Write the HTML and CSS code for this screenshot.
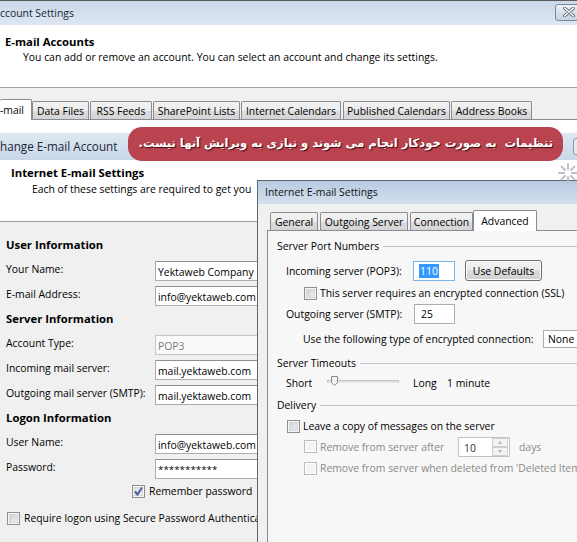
FILE: index.html
```html
<!DOCTYPE html>
<html lang="en">
<head>
<meta charset="utf-8">
<title>Account Settings</title>
<link rel="stylesheet" href="styles.css">
</head>
<body>
<div class="screen">

  <section class="win acct">
    <header class="tbar tbar-acct">
      <span class="ttl">ccount Settings</span>
      <span class="xbtn"><svg width="12" height="10" viewBox="0 0 12 10"><path d="M1.5 1 L10.5 9 M10.5 1 L1.5 9" stroke="#5a6470" stroke-width="3.2" stroke-linecap="round"/><path d="M1.5 1 L10.5 9 M10.5 1 L1.5 9" stroke="#ffffff" stroke-width="1.6" stroke-linecap="round"/></svg></span>
    </header>
    <div class="acct-head">
      <h1 class="bh">E-mail Accounts</h1>
      <p class="desc">You can add or remove an account. You can select an account and change its settings.</p>
    </div>
    <nav class="tabs tabs-acct">
      <span class="tab sel t1">-mail</span>
      <span class="tab t2">Data Files</span>
      <span class="tab t3">RSS Feeds</span>
      <span class="tab t4">SharePoint Lists</span>
      <span class="tab t5">Internet Calendars</span>
      <span class="tab t6">Published Calendars</span>
      <span class="tab t7">Address Books</span>
    </nav>
    <div class="acct-panel"></div>
  </section>

  <section class="win chg">
    <header class="tbar tbar-chg">
      <span class="ttl2">hange E-mail Account</span>
      <span class="chg-btn"></span>
    </header>
    <div class="chg-head">
      <h2 class="bh">Internet E-mail Settings</h2>
      <p class="desc2">Each of these settings are required to get you</p>
    </div>
    <div class="chg-body">
      <h3 class="bh sec first">User Information</h3>
      <div class="frow"><span class="flbl">Your Name:</span><span class="tb">Yektaweb Company</span></div>
      <div class="frow"><span class="flbl">E-mail Address:</span><span class="tb">info@yektaweb.com</span></div>
      <h3 class="bh sec">Server Information</h3>
      <div class="frow"><span class="flbl">Account Type:</span><span class="tb dis">POP3</span></div>
      <div class="frow"><span class="flbl">Incoming mail server:</span><span class="tb">mail.yektaweb.com</span></div>
      <div class="frow"><span class="flbl">Outgoing mail server (SMTP):</span><span class="tb">mail.yektaweb.com</span></div>
      <h3 class="bh sec">Logon Information</h3>
      <div class="frow"><span class="flbl">User Name:</span><span class="tb">info@yektaweb.com</span></div>
      <div class="frow"><span class="flbl">Password:</span><span class="tb pw">***********</span></div>
      <div class="crow remember"><span class="cb on"><svg width="11" height="11" viewBox="0 0 11 11"><path d="M2 5.5 L4.5 8.5 L9 1.5" fill="none" stroke="#4b5f97" stroke-width="2"/></svg></span><span>Remember password</span></div>
      <div class="crow require"><span class="cb"></span><span>Require logon using Secure Password Authentication</span></div>
    </div>
  </section>

  <div class="banner"><p class="banner-txt" dir="rtl" lang="fa">تنظیمات  به صورت خودکار انجام می شوند و نیازی به ویرایش آنها نیست.</p></div>

  <svg class="spinner" width="22" height="22" viewBox="0 0 22 22">
    <g stroke="#b9bec6" stroke-width="2" stroke-linecap="round">
      <path d="M11 2 L11 7"/><path d="M11 15 L11 20"/><path d="M2 11 L7 11"/><path d="M15 11 L20 11"/>
      <path d="M4.6 4.6 L8 8"/><path d="M14 14 L17.4 17.4"/><path d="M4.6 17.4 L8 14"/><path d="M14 8 L17.4 4.6"/>
    </g>
  </svg>

  <section class="win inet">
    <header class="tbar tbar-inet"><span class="ttl3">Internet E-mail Settings</span></header>
    <div class="inet-body">
      <nav class="tabs tabs-inet">
        <span class="tab i1">General</span>
        <span class="tab i2">Outgoing Server</span>
        <span class="tab i3">Connection</span>
        <span class="tab sel i4">Advanced</span>
      </nav>
      <div class="inet-panel">
        <div class="grp g1"><span>Server Port Numbers</span><i class="gline"></i></div>
        <div class="row r-in">
          <span class="lbl">Incoming server (POP3):</span>
          <span class="tb2 focus"><span class="hl">110</span></span>
          <span class="btn">Use Defaults</span>
        </div>
        <div class="crow2 r-ssl"><span class="cb"></span><span>This server requires an encrypted connection (SSL)</span></div>
        <div class="row r-out">
          <span class="lbl">Outgoing server (SMTP):</span>
          <span class="tb2 out">25</span>
        </div>
        <div class="row r-enc">
          <span class="lbl2">Use the following type of encrypted connection:</span>
          <span class="sel-box">None</span>
        </div>
        <div class="grp g2"><span>Server Timeouts</span><i class="gline"></i></div>
        <div class="row r-slide">
          <span class="short">Short</span>
          <span class="track"><svg class="thumb" width="7" height="10" viewBox="0 0 7 10"><path d="M0.5 0.5 H6.5 V6.5 L3.5 9.5 L0.5 6.5 Z" fill="#f2f2f2" stroke="#8a8a8a"/></svg></span>
          <span class="long">Long</span>
          <span>1 minute</span>
        </div>
        <div class="grp g3"><span>Delivery</span><i class="gline"></i></div>
        <div class="crow2 r-leave"><span class="cb"></span><span>Leave a copy of messages on the server</span></div>
        <div class="crow2 r-after dim">
          <span class="cb off"></span><span class="after-lbl">Remove from server after</span>
          <span class="spin"><span class="spin-val">10</span><span class="spin-btns"><i class="up"></i><i class="dn"></i></span></span>
          <span class="days">days</span>
        </div>
        <div class="crow2 r-del dim"><span class="cb off"></span><span>Remove from server when deleted from 'Deleted Item</span></div>
      </div>
    </div>
  </section>

</div>
</body>
</html>
```

FILE: styles.css
```css
* { box-sizing: border-box; }
html, body { margin: 0; padding: 0; background: #f0f0f0; }
body { font-family: "Open Sans", "Noto Sans", sans-serif; font-size: 10.4px; color: #000; }
p, h1, h2, h3 { margin: 0; font-weight: normal; }

.screen { position: relative; width: 577px; height: 542px; overflow: hidden; background: #f0f0f0; }

.win { position: absolute; overflow: hidden; }
.bh { font-weight: 700; font-size: 11.3px; line-height: 14px; }

/* ---------- Account Settings ---------- */
.acct { left: 0; top: 0; width: 577px; height: 542px; background: #f0f0f0; }
.tbar-acct {
  height: 25px; border-top: 1px solid #5b5b5b;
  background: linear-gradient(#cbd8e9, #d6e1ef 60%, #dde6f2);
  display: flex; align-items: center; justify-content: space-between;
}
.ttl { color: #1c2633; line-height: 14px; padding-bottom: 1px; }
.xbtn {
  width: 27px; height: 17px; margin-right: -5px; margin-top: -2px; flex: none;
  border: 1px solid #7b8797; border-radius: 3px;
  background: linear-gradient(#f1f4f8, #d8e0ea 50%, #c8d2de);
  display: flex; align-items: center; padding-left: 7px;
}
.acct-head { background: #fff; height: 63px; border-bottom: 1px solid #a0a0a0; padding: 10px 0 0 5px; }
.desc { margin: 1px 0 0 18px; line-height: 14px; }

.tabs { display: flex; align-items: flex-end; }
.tab {
  flex: none; height: 18px; border: 1px solid #898c95; border-bottom: none;
  background: linear-gradient(#f3f3f3, #ebebeb 50%, #dddddd 51%, #d4d4d4);
  display: flex; align-items: center; justify-content: center;
  line-height: 14px; white-space: nowrap; border-radius: 2px 2px 0 0;
}
.tab.sel { height: 21px; background: #fff; margin-bottom: -1px; position: relative; z-index: 1; }
.tabs-acct { height: 31px; }
.t1 { width: 32px; justify-content: flex-start; border-left: none; }
.t2 { width: 57px; }
.t3 { width: 62px; margin-left: 1px; }
.t4 { width: 87px; margin-left: 1px; }
.t5 { width: 100px; margin-left: 1px; }
.t6 { width: 107px; margin-left: 2px; }
.t7 { width: 81px; margin-left: 1px; }
.acct-panel { height: 400px; background: #fff; border-top: 1px solid #898c95; }

/* ---------- Change E-mail Account ---------- */
.chg { left: 0; top: 133px; width: 577px; height: 409px; background: #f0f0f0; }
.tbar-chg {
  height: 27px; background: linear-gradient(#dfe8f2, #d3dfed 50%, #c9d7e8);
  display: flex; align-items: center; justify-content: space-between;
}
.ttl2 { font-size: 11.7px; color: #1c2633; line-height: 15px; }
.chg-btn { flex: none; width: 12px; height: 17px; margin-right: -8px; border: 1px solid #8a98ab; border-radius: 3px; background: #e3eaf3; }
.chg-head { height: 62px; background: #fff; border-bottom: 1px solid #a0a0a0; padding: 6px 0 0 11px; }
.desc2 { margin: 2px 0 0 21px; line-height: 14px; white-space: nowrap; }

.chg-body { padding: 16px 0 0 6px; width: 257px; }
.sec { margin: 1px 0 9px; white-space: nowrap; }
.sec.first { margin-top: 0; }
.frow { height: 25px; display: flex; align-items: flex-start; white-space: nowrap; }
.flbl { flex: none; width: 149px; line-height: 14px; padding-top: 1px; }
.tb {
  width: 120px; height: 20px; flex: none;
  border: 1px solid #abadb3; border-top-color: #8e9096; background: #fff;
  padding: 1px 0 0 2px; line-height: 18px; margin-top: 0;
}
.tb.dis { color: #7a7a7a; background: #fafafa; border-color: #c5c5c5; }
.tb.pw { font-size: 9.8px; letter-spacing: 0; }

.crow { display: flex; align-items: center; gap: 4px; white-space: nowrap; line-height: 14px; }
.remember { margin: 0 0 0 126px; height: 14px; }
.require { margin: 13px 0 0 1px; height: 14px; }

.cb {
  width: 13px; height: 13px; flex: none; border: 1px solid #8f8f8f;
  background: linear-gradient(135deg, #c9ccd1, #f4f4f4);
  box-shadow: inset 0 0 0 1px #f6f6f6, inset 0 0 0 2px #d4d6d9;
  display: flex; align-items: center; justify-content: center;
}
.cb.on { background: linear-gradient(135deg, #d6dbe2, #f6f6f6); }
.cb.off { border-color: #bcbcbc; background: #f4f4f4; box-shadow: inset 0 0 0 1px #fff; }

/* ---------- Banner ---------- */
.banner {
  position: absolute; left: 128px; top: 127px; width: 435px; height: 34px;
  border-radius: 14px; background: #b9434f; z-index: 5;
  display: flex; align-items: center; justify-content: flex-end;
  padding-right: 10px; padding-bottom: 2px; overflow: hidden;
}
.banner-txt {
  font-family: "DejaVu Sans", sans-serif; font-weight: 700; font-size: 11.5px;
  color: #fff; text-shadow: 1px 1px 1px #3d0a12; white-space: pre; line-height: 18px;
}

.spinner { position: absolute; left: 557px; top: 162px; z-index: 6; }

/* ---------- Internet E-mail Settings ---------- */
.inet {
  left: 257px; top: 180px; width: 330px; height: 370px; z-index: 4;
  border-left: 1px solid #5d6671; border-top: 1px solid #5d6671; background: #f0f0f0;
}
.tbar-inet {
  height: 23px; background: linear-gradient(#b9cbe1, #c8d7ea 60%, #d3dfee);
  display: flex; align-items: center; padding: 0 0 1px 7px;
}
.ttl3 { color: #111; line-height: 14px; }
.inet-body { padding-left: 9px; }
.tabs-inet { height: 26px; padding-left: 3px; }
.i1 { width: 48px; }
.i2 { width: 88px; margin-left: 2px; }
.i3 { width: 63px; margin-left: 2px; }
.i4 { width: 64px; background: #f7f7f7; }
.inet-panel {
  height: 330px; background: #f7f7f7;
  border-left: 1px solid #898c95; border-top: 1px solid #898c95;
  padding: 8px 0 0 9px; white-space: nowrap;
}
.inet-panel span { flex: none; }
.grp { display: flex; align-items: center; height: 14px; line-height: 14px; }
.gline { flex: 1; height: 0; border-top: 1px solid #c2c6cb; margin-left: 4px; margin-top: 1px; }
.g2, .g3 { margin-top: 8px; }

.row { display: flex; align-items: center; }
.lbl { width: 127px; margin-left: 9px; line-height: 14px; }
.lbl2 { width: 240px; margin-left: 26px; line-height: 14px; }
.r-in { height: 21px; margin-top: 7px; }
.tb2 {
  width: 42px; height: 20px; border: 1px solid #abadb3; background: #fff;
  display: flex; align-items: center; padding-left: 6px; line-height: 14px;
}
.tb2.focus { border-color: #7eb4ea; padding-left: 5px; }
.hl { background: #3399ff; color: #fff; padding: 0 1px; height: 14px; line-height: 14px; }
.btn {
  margin-left: 10px; width: 77px; height: 21px; border: 1px solid #707070; border-radius: 3px;
  background: linear-gradient(#f2f2f2, #ebebeb 49%, #dddddd 50%, #cfcfcf);
  box-shadow: inset 0 0 0 1px #fcfcfc;
  display: flex; align-items: center; justify-content: center; line-height: 14px;
}
.crow2 { display: flex; align-items: center; gap: 3px; line-height: 14px; }
.r-ssl { height: 16px; margin: 4px 0 0 27px; }
.r-out { height: 20px; margin-top: 3px; }
.tb2.out { width: 41px; margin-left: 1px; }
.r-enc { height: 19px; margin-top: 5px; }
.sel-box {
  width: 60px; height: 18px; border: 1px solid #abadb3; background: #fff;
  padding-left: 4px; line-height: 16px;
}
.r-slide { height: 14px; margin-top: 6px; line-height: 14px; }
.short { width: 41px; margin-left: 9px; }
.track {
  width: 72px; height: 3px; border: 1px solid #c5c5c5; border-bottom-color: #e8e8e8;
  background: #e3e3e3; position: relative; margin-top: -3px;
}
.thumb { position: absolute; left: 3px; top: -5px; }
.long { margin-left: 14px; width: 34px; }
.r-leave { height: 16px; margin: 6px 0 0 10px; }
.r-after { height: 21px; margin: 2px 0 0 27px; }
.dim { color: #8a8a8a; }
.after-lbl { width: 135px; }
.spin {
  width: 52px; height: 20px; border: 1px solid #c3c3c3; background: #fff;
  display: flex; align-items: center; justify-content: space-between; padding-left: 5px; color: #333;
}
.spin-val { line-height: 14px; padding-top: 2px; }
.spin-btns { width: 16px; height: 18px; display: flex; flex-direction: column; margin-right: 1px; }
.spin-btns i {
  flex: 1; border: 1px solid #d0d0d0; background: #f3f3f3; position: relative;
}
.spin-btns .up::after, .spin-btns .dn::after {
  content: ""; position: absolute; left: 5px; top: 2px;
  border-left: 2.5px solid transparent; border-right: 2.5px solid transparent;
}
.spin-btns .up::after { border-bottom: 3px solid #b5b5b5; }
.spin-btns .dn::after { border-top: 3px solid #b5b5b5; }
.days { margin-left: 6px; }
.r-del { height: 16px; margin: 3px 0 0 27px; }
```
